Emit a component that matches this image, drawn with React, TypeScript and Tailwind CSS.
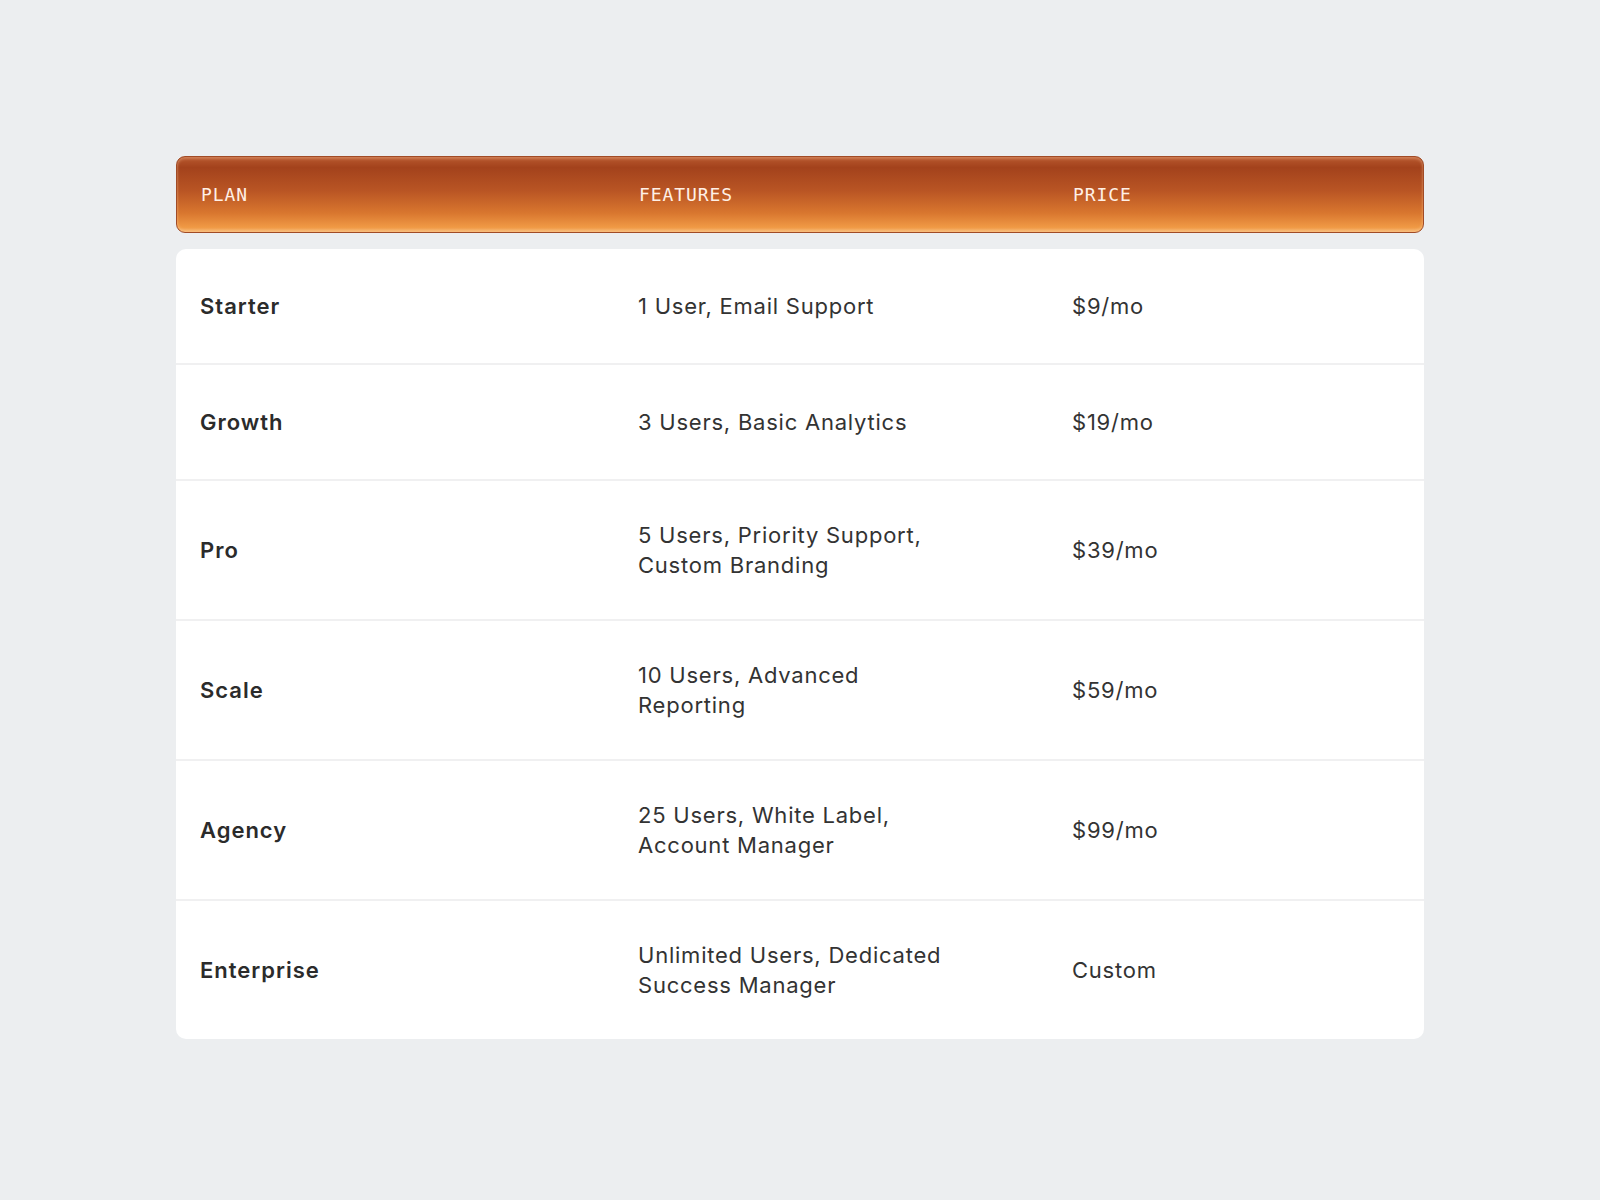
const PLANS = [
  { name: 'Starter', features: '1 User, Email Support', price: '$9/mo' },
  { name: 'Growth', features: '3 Users, Basic Analytics', price: '$19/mo' },
  { name: 'Pro', features: '5 Users, Priority Support, Custom Branding', price: '$39/mo' },
  { name: 'Scale', features: '10 Users, Advanced Reporting', price: '$59/mo' },
  { name: 'Agency', features: '25 Users, White Label, Account Manager', price: '$99/mo' },
  { name: 'Enterprise', features: 'Unlimited Users, Dedicated Success Manager', price: 'Custom' },
]

const COLS = 'grid grid-cols-[438px_434px_1fr] items-center'

export default function App() {
  return (
    <div className="min-h-[1200px] bg-[#eceef0] pt-[156px] font-['Inter','Noto_Sans',sans-serif]">
      <div className="mx-auto w-[1248px]">
        {/* header bar */}
        <div
          className={`${COLS} h-[77px] rounded-[9px] border border-[#a14b26] bg-[linear-gradient(180deg,#b8582e_0%,#a3421c_14%,#b95524_45%,#d9772f_75%,#f09a45_94%,#f6b06a_100%)] shadow-[inset_0_2px_3px_rgba(255,200,160,0.35),inset_0_-2px_3px_rgba(255,220,170,0.35)]`}
        >
          {['PLAN', 'FEATURES', 'PRICE'].map(h => (
            <div
              key={h}
              className="px-6 font-['DejaVu_Sans_Mono',monospace] text-[18px] tracking-[0.05em] text-[#fff0e6]"
            >
              {h}
            </div>
          ))}
        </div>

        {/* rows */}
        <div className="mt-[16px] overflow-hidden rounded-[10px] bg-white">
          {PLANS.map((p, i) => (
            <div
              key={p.name}
              className={`${COLS} py-[39px] ${i > 0 ? 'border-t-2 border-[#f0f0f1]' : ''}`}
            >
              <div className="px-6 text-[22px] leading-[36px] font-semibold tracking-[0.045em] text-[#2b2b2b]">
                {p.name}
              </div>
              <div className="px-6">
                <div className="max-w-[325px] text-[22px] leading-[30px] tracking-[0.035em] text-[#333]">
                  {p.features}
                </div>
              </div>
              <div className="px-6 text-[22px] leading-[30px] tracking-[0.035em] text-[#333]">
                {p.price}
              </div>
            </div>
          ))}
        </div>
      </div>
    </div>
  )
}
